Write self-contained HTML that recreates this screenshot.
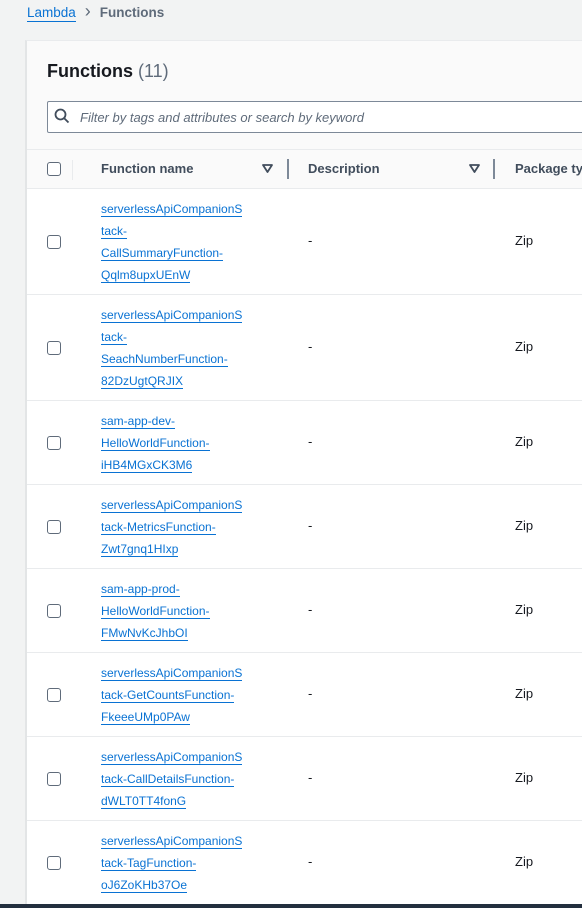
<!DOCTYPE html>
<html><head><style>
html,body{margin:0;width:582px;height:908px;overflow:hidden}
body{background:#f2f3f3;font-family:"Liberation Sans",sans-serif;position:relative;color:#16191f}
.a{position:absolute}
.bc{top:5px;left:27px;font-size:13.5px}
.bc .l{color:#0972d3;border-bottom:1px solid #0972d3;padding-bottom:1px}
.card{left:25px;top:40px;width:600px;height:868px;background:#fff;border-left:2px solid #e3e5e6;border-top:1px solid #e9ebed}
.hd{left:27px;top:41px;width:560px;height:108px;background:#fafafa;border-bottom:1px solid #e9ebed}
.sr{left:47px;top:101px;width:560px;height:30px;border:1px solid #7d8998;border-radius:2px;background:#fff}
.cb{width:12px;height:12px;border:1.5px solid #5f6b7a;border-radius:3px;background:#fff;left:47px}
.th{font-weight:bold;font-size:13px;color:#414d5c;top:161px;white-space:nowrap}
.row{left:27px;width:560px;border-bottom:1px solid #e9ebed}
.lk{position:absolute;left:74px;font-size:12px;line-height:22px;color:#0972d3;white-space:nowrap}
.lk span{border-bottom:1px solid #0972d3}
.d{position:absolute;left:281px;font-size:13px}
.z{position:absolute;left:488px;font-size:13px}
</style></head><body>
<div class="a bc"><span class="l">Lambda</span><span style="color:#5f6b7a;margin:0 9px;font-size:18px;line-height:13px">&#x203A;</span><span style="color:#5f6b7a;font-weight:bold">Functions</span></div>
<div class="a card"></div>
<div class="a hd"></div>
<div class="a" style="left:47px;top:61px;font-size:18px;font-weight:bold">Functions <span style="font-weight:normal;color:#5f6b7a">(11)</span></div>
<div class="a sr"></div>
<svg class="a" style="left:54px;top:108px" width="16" height="16" viewBox="0 0 16 16"><circle cx="6.5" cy="6.5" r="5" fill="none" stroke="#414d5c" stroke-width="1.8"/><path d="M10.2 10.2L14.5 14.5" stroke="#414d5c" stroke-width="1.8"/></svg>
<div class="a" style="left:80px;top:110px;font-size:13px;font-style:italic;color:#5f6b7a">Filter by tags and attributes or search by keyword</div>
<div class="a" style="left:27px;top:150px;width:560px;height:38px;background:#fafafa;border-bottom:1px solid #e9ebed"></div>
<div class="a cb" style="top:162px"></div>
<div class="a" style="left:72px;top:160px;width:1px;height:20px;background:#e9ebed"></div>
<div class="a th" style="left:101px">Function name</div>
<svg class="a" style="left:262px;top:164px" width="11" height="9" viewBox="0 0 11 9"><path d="M1 1H10L5.5 8Z" fill="none" stroke="#414d5c" stroke-width="1.8" stroke-linejoin="round"/></svg>
<div class="a" style="left:287px;top:159px;width:2px;height:20px;background:#7d8998"></div>
<div class="a th" style="left:308px">Description</div>
<svg class="a" style="left:469px;top:164px" width="11" height="9" viewBox="0 0 11 9"><path d="M1 1H10L5.5 8Z" fill="none" stroke="#414d5c" stroke-width="1.8" stroke-linejoin="round"/></svg>
<div class="a" style="left:493px;top:159px;width:2px;height:20px;background:#7d8998"></div>
<div class="a th" style="left:515px">Package ty</div>

<div class="a row" style="top:188px;height:106px"><div class="lk" style="top:10px"><span>serverlessApiCompanionS</span><br><span>tack-</span><br><span>CallSummaryFunction-</span><br><span>Qqlm8upxUEnW</span></div><div class="d" style="top:45px">-</div><div class="z" style="top:45px">Zip</div></div>
<div class="a cb" style="top:235px"></div>
<div class="a row" style="top:294px;height:106px"><div class="lk" style="top:10px"><span>serverlessApiCompanionS</span><br><span>tack-</span><br><span>SeachNumberFunction-</span><br><span>82DzUgtQRJIX</span></div><div class="d" style="top:45px">-</div><div class="z" style="top:45px">Zip</div></div>
<div class="a cb" style="top:341px"></div>
<div class="a row" style="top:400px;height:84px"><div class="lk" style="top:10px"><span>sam-app-dev-</span><br><span>HelloWorldFunction-</span><br><span>iHB4MGxCK3M6</span></div><div class="d" style="top:34px">-</div><div class="z" style="top:34px">Zip</div></div>
<div class="a cb" style="top:436px"></div>
<div class="a row" style="top:484px;height:84px"><div class="lk" style="top:10px"><span>serverlessApiCompanionS</span><br><span>tack-MetricsFunction-</span><br><span>Zwt7gnq1HIxp</span></div><div class="d" style="top:34px">-</div><div class="z" style="top:34px">Zip</div></div>
<div class="a cb" style="top:520px"></div>
<div class="a row" style="top:568px;height:84px"><div class="lk" style="top:10px"><span>sam-app-prod-</span><br><span>HelloWorldFunction-</span><br><span>FMwNvKcJhbOI</span></div><div class="d" style="top:34px">-</div><div class="z" style="top:34px">Zip</div></div>
<div class="a cb" style="top:604px"></div>
<div class="a row" style="top:652px;height:84px"><div class="lk" style="top:10px"><span>serverlessApiCompanionS</span><br><span>tack-GetCountsFunction-</span><br><span>FkeeeUMp0PAw</span></div><div class="d" style="top:34px">-</div><div class="z" style="top:34px">Zip</div></div>
<div class="a cb" style="top:688px"></div>
<div class="a row" style="top:736px;height:84px"><div class="lk" style="top:10px"><span>serverlessApiCompanionS</span><br><span>tack-CallDetailsFunction-</span><br><span>dWLT0TT4fonG</span></div><div class="d" style="top:34px">-</div><div class="z" style="top:34px">Zip</div></div>
<div class="a cb" style="top:772px"></div>
<div class="a row" style="top:820px;height:84px;border:0"><div class="lk" style="top:10px"><span>serverlessApiCompanionS</span><br><span>tack-TagFunction-</span><br><span>oJ6ZoKHb37Oe</span></div><div class="d" style="top:34px">-</div><div class="z" style="top:34px">Zip</div></div>
<div class="a cb" style="top:856px"></div>
<div class="a" style="left:0;top:904px;width:582px;height:4px;background:#232f3e"></div>
</body></html>
